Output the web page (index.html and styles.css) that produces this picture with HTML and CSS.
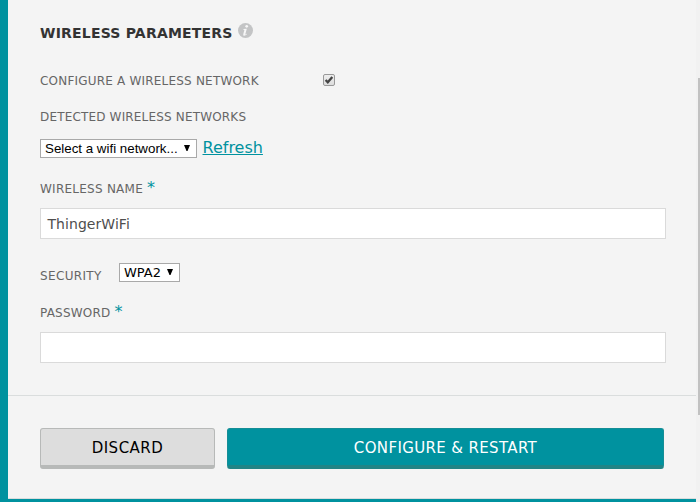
FILE: index.html
```
<!DOCTYPE html>
<html lang="en">
<head>
<meta charset="utf-8">
<title>Wireless parameters</title>
<link rel="stylesheet" href="styles.css">
</head>
<body>
<div class="page">
  <main class="panel">
    <form class="fields">
      <h1 class="heading"><span class="heading-text">WIRELESS PARAMETERS</span>
        <svg class="info" viewBox="0 0 15 15"><circle cx="7.5" cy="7.5" r="7.5" fill="#c3c4c5"/><circle cx="8.7" cy="3.3" r="1.35" fill="#f7f7f7"/><path d="M5.3 6.1L8.8 5.7L7.3 11.2Q7.2 12 8.9 10.7L9.2 11.1Q7.2 13.2 5.8 12.8Q4.9 12.5 5.3 11L6.4 6.9L5.2 6.6Z" fill="#f7f7f7"/></svg>
      </h1>
      <div class="row row-enable">
        <span class="label enable-text">CONFIGURE A WIRELESS NETWORK</span>
        <span class="check"><svg viewBox="0 0 12 12"><path d="M2.6 6L4.8 8.3L9.3 3" fill="none" stroke="#444" stroke-width="2.3"/></svg></span>
      </div>
      <div class="row"><span class="label detected-text">DETECTED WIRELESS NETWORKS</span></div>
      <div class="row row-detected">
        <span class="select select-network"><span>Select a wifi network...</span><svg class="arrow" viewBox="0 0 6 6"><path d="M0 0H6L3.5 6H2.5Z"/></svg></span>
        <a class="refresh">Refresh</a>
      </div>
      <div class="row row-name"><span class="label name-text">WIRELESS NAME</span><span class="star">*</span></div>
      <div class="input"><span class="value">ThingerWiFi</span></div>
      <div class="row row-security">
        <span class="label security-text">SECURITY</span>
        <span class="select select-security"><span>WPA2</span><svg class="arrow" viewBox="0 0 6 6"><path d="M0 0H6L3.5 6H2.5Z"/></svg></span>
      </div>
      <div class="row row-password"><span class="label password-text">PASSWORD</span><span class="star">*</span></div>
      <div class="input"></div>
    </form>
    <footer class="actions">
      <div class="button discard"><span>DISCARD</span></div>
      <div class="button configure"><span>CONFIGURE &amp; RESTART</span></div>
    </footer>
  </main>
  <div class="scrollbar"><div class="thumb"></div></div>
</div>
</body>
</html>
```
FILE: styles.css
```
* { box-sizing: border-box; }
body { margin: 0; font-family: Verdana, "DejaVu Sans", sans-serif; overflow: hidden; }
.page { display: flex; width: 700px; height: 502px; padding-left: 8px; background: #00929f; }
.panel { width: 688px; height: 499px; background: #f4f4f4; border-bottom: 1px solid #dadddd; }
.fields { height: 395px; padding: 22px 30px 0 32px; }
.heading { display: flex; margin: 0; height: 22px; line-height: 22px; font-size: 14px; color: #333; white-space: nowrap; }
.heading-text { width: 198px; letter-spacing: 0.2px; }
.info { width: 15px; height: 15px; margin-top: 1px; }
.row { display: flex; height: 20px; line-height: 22px; white-space: nowrap; }
.label { font-size: 12px; color: #666; letter-spacing: 0.2px; }
.row-enable { margin: 26px 0 16px; align-items: center; }
.enable-text { width: 283px; line-height: 20px; padding-top: 2px; }
.detected-text { letter-spacing: 0.17px; }
.check { width: 12px; height: 12px; border: 1px solid #999; border-radius: 2px; background: linear-gradient(#eee, #ddd); }
.check svg { display: block; width: 12px; height: 12px; margin: -1px; }
.row-detected { margin: 13px 0 19px; }
.select { display: flex; justify-content: space-between; height: 19px; line-height: 17px; padding: 0 6px 0 4px; border: 1px solid #a9a9a9; background: #fff; color: #000; }
.select-network { width: 157px; font-family: "Liberation Sans", Arial, sans-serif; font-size: 13.33px; }
.select-security { width: 61px; font-family: "DejaVu Sans", sans-serif; font-size: 13px; }
.arrow { flex: none; width: 6px; height: 6px; margin-top: 5px; }
.refresh { margin-left: 5.5px; height: 16px; line-height: 18px; font-size: 16px; color: #00929f; text-decoration: underline; }
.name-text { letter-spacing: 0.25px; }
.row-name { margin-bottom: 10px; }
.star { margin-left: 4px; line-height: 20px; font-size: 16px; color: #00929f; }
.input { height: 31px; padding-left: 6.5px; border: 1px solid #dadada; background: #fff; line-height: 30px; font-size: 14px; color: #4e4e4e; }
.value { letter-spacing: 0.05px; }
.row-security { margin: 24px 0 19px; }
.security-text { width: 79px; padding-top: 2px; letter-spacing: 0.35px; }
.row-password { margin-bottom: 10px; }
.actions { display: flex; gap: 12px; height: 103px; padding: 32px 0 0 32px; border-top: 1px solid #dadddd; }
.button { height: 41px; border-radius: 3px; text-align: center; line-height: 38px; font-size: 15px; letter-spacing: 0.36px; white-space: nowrap; }
.discard { width: 175px; border: 1px solid #b7b9b8; border-bottom-width: 4px; background: #ddd; color: #000; letter-spacing: 0.5px; }
.configure { width: 437px; border: 1px solid #158e96; border-bottom: 4px solid #218486; background: #00929f; color: #fff; }
.scrollbar { width: 4px; height: 502px; padding: 78px 0 0 2px; background: #f1f1f1; }
.thumb { width: 2px; height: 337px; background: #c1c1c1; }
```
